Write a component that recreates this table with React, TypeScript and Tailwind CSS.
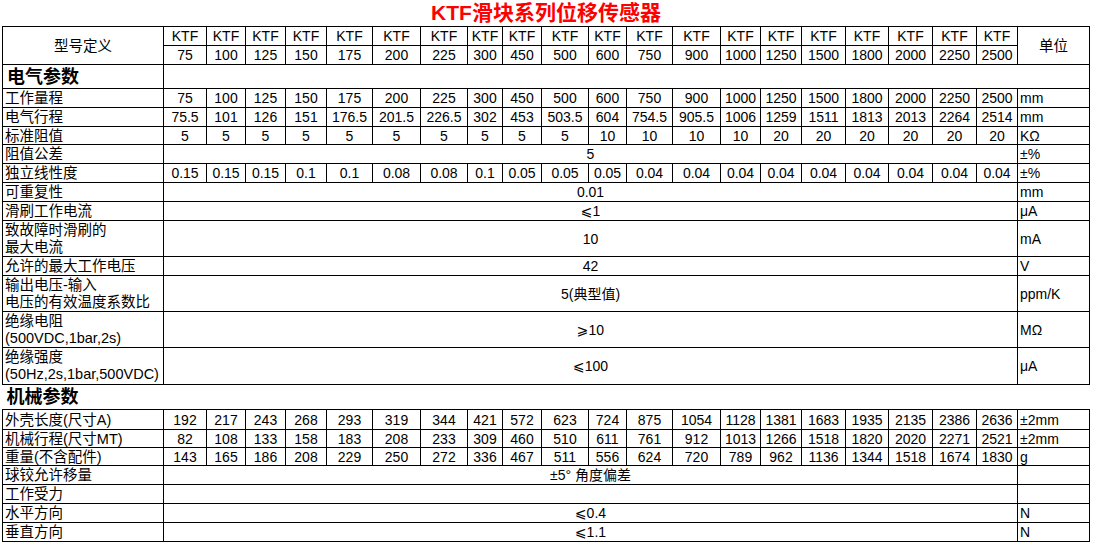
import React from "react";

const models = [75, 100, 125, 150, 175, 200, 225, 300, 450, 500, 600, 750, 900, 1000, 1250, 1500, 1800, 2000, 2250, 2500];
const colWidths = [161, 43, 39, 40, 41, 46, 48, 47, 35, 39, 47, 38, 46, 48, 40, 41, 44, 43, 44, 44, 41, 72];

type Row =
  | { kind: "values"; label: string; values: (string | number)[]; unit: string; h: string }
  | { kind: "span"; label: React.ReactNode; value: string; unit: string; h: string; two?: boolean }
  | { kind: "section"; label: string; h: string; open?: boolean };

const rows: Row[] = [
  { kind: "section", label: "电气参数", h: "h-[24px]" },
  { kind: "values", label: "工作量程", values: models, unit: "mm", h: "h-[19px]" },
  {
    kind: "values",
    label: "电气行程",
    values: ["75.5", 101, 126, 151, "176.5", "201.5", "226.5", 302, 453, "503.5", 604, "754.5", "905.5", 1006, 1259, 1511, 1813, 2013, 2264, 2514],
    unit: "mm",
    h: "h-[19px]",
  },
  {
    kind: "values",
    label: "标准阻值",
    values: [5, 5, 5, 5, 5, 5, 5, 5, 5, 5, 10, 10, 10, 10, 20, 20, 20, 20, 20, 20],
    unit: "KΩ",
    h: "h-[18px]",
  },
  { kind: "span", label: "阻值公差", value: "5", unit: "±%", h: "h-[19px]" },
  {
    kind: "values",
    label: "独立线性度",
    values: ["0.15", "0.15", "0.15", "0.1", "0.1", "0.08", "0.08", "0.1", "0.05", "0.05", "0.05", "0.04", "0.04", "0.04", "0.04", "0.04", "0.04", "0.04", "0.04", "0.04"],
    unit: "±%",
    h: "h-[19px]",
  },
  { kind: "span", label: "可重复性", value: "0.01", unit: "mm", h: "h-[19px]" },
  { kind: "span", label: "滑刷工作电流", value: "⩽1", unit: "μA", h: "h-[19px]" },
  {
    kind: "span",
    label: (
      <>
        致故障时滑刷的
        <br />
        最大电流
      </>
    ),
    value: "10",
    unit: "mA",
    h: "h-[36px]",
    two: true,
  },
  { kind: "span", label: "允许的最大工作电压", value: "42", unit: "V", h: "h-[19px]" },
  {
    kind: "span",
    label: (
      <>
        输出电压-输入
        <br />
        电压的有效温度系数比
      </>
    ),
    value: "5(典型值)",
    unit: "ppm/K",
    h: "h-[36px]",
    two: true,
  },
  {
    kind: "span",
    label: (
      <>
        绝缘电阻
        <br />
        (500VDC,1bar,2s)
      </>
    ),
    value: "⩾10",
    unit: "MΩ",
    h: "h-[36px]",
    two: true,
  },
  {
    kind: "span",
    label: (
      <>
        绝缘强度
        <br />
        (50Hz,2s,1bar,500VDC)
      </>
    ),
    value: "⩽100",
    unit: "μA",
    h: "h-[37px]",
    two: true,
  },
  { kind: "section", label: "机械参数", h: "h-[25px]", open: true },
  {
    kind: "values",
    label: "外壳长度(尺寸A)",
    values: [192, 217, 243, 268, 293, 319, 344, 421, 572, 623, 724, 875, 1054, 1128, 1381, 1683, 1935, 2135, 2386, 2636],
    unit: "±2mm",
    h: "h-[20px]",
  },
  {
    kind: "values",
    label: "机械行程(尺寸MT)",
    values: [82, 108, 133, 158, 183, 208, 233, 309, 460, 510, 611, 761, 912, 1013, 1266, 1518, 1820, 2020, 2271, 2521],
    unit: "±2mm",
    h: "h-[18px]",
  },
  {
    kind: "values",
    label: "重量(不含配件)",
    values: [143, 165, 186, 208, 229, 250, 272, 336, 467, 511, 556, 624, 720, 789, 962, 1136, 1344, 1518, 1674, 1830],
    unit: "g",
    h: "h-[18px]",
  },
  { kind: "span", label: "球铰允许移量", value: "±5° 角度偏差", unit: "", h: "h-[19px]" },
  { kind: "span", label: "工作受力", value: "", unit: "", h: "h-[19px]" },
  { kind: "span", label: "水平方向", value: "⩽0.4", unit: "N", h: "h-[19px]" },
  { kind: "span", label: "垂直方向", value: "⩽1.1", unit: "N", h: "h-[19px]" },
];

const cell = "border border-black p-0 leading-[16px] whitespace-nowrap overflow-hidden";

const App = () => {
  return (
    <div className="w-[1100px] h-[551px] bg-white text-black font-['Liberation_Sans','Noto_Sans_CJK_SC','DejaVu_Sans',sans-serif] text-[14px]">
      <div className="ml-[2px] w-[1088px] h-[26px] pt-[1px] text-center text-[21px] leading-[24px] font-bold text-[#ff0000]">
        KTF滑块系列位移传感器
      </div>

      <table className="ml-[2px] table-fixed border-collapse w-[1088px]">
        <colgroup>
          {colWidths.map((w, i) => (
            <col key={i} style={{ width: w }} />
          ))}
        </colgroup>
        <tbody>
          <tr className="h-[19px]">
            <td rowSpan={2} className={`${cell} text-center align-middle text-[14.5px]`}>
              型号定义
            </td>
            {models.map((m) => (
              <td key={m} className={`${cell} text-center`}>
                KTF
              </td>
            ))}
            <td rowSpan={2} className={`${cell} text-center align-middle text-[14.5px]`}>
              单位
            </td>
          </tr>
          <tr className="h-[19px]">
            {models.map((m) => (
              <td key={m} className={`${cell} text-center`}>
                {m}
              </td>
            ))}
          </tr>

          {rows.map((r, i) => {
            if (r.kind === "section") {
              return (
                <tr key={i} className={r.h}>
                  <td
                    className={`${cell} pl-[4px] text-[18px] leading-[20px] ${r.open ? "border-x-0 font-semibold" : "font-bold"}`}
                  >
                    {r.label}
                  </td>
                  <td colSpan={21} className={`${cell} ${r.open ? "border-x-0" : ""}`}></td>
                </tr>
              );
            }
            if (r.kind === "values") {
              return (
                <tr key={i} className={r.h}>
                  <td className={`${cell} pl-[2px] text-[14.5px]`}>{r.label}</td>
                  {r.values.map((v, j) => (
                    <td key={j} className={`${cell} text-center`}>
                      {v}
                    </td>
                  ))}
                  <td className={`${cell} pl-[2px]`}>{r.unit}</td>
                </tr>
              );
            }
            return (
              <tr key={i} className={r.h}>
                <td className={`${cell} pl-[2px] text-[14.5px] ${r.two ? "leading-[17px]" : ""}`}>{r.label}</td>
                <td colSpan={20} className={`${cell} text-center`}>
                  {r.value}
                </td>
                <td className={`${cell} pl-[2px]`}>{r.unit}</td>
              </tr>
            );
          })}
        </tbody>
      </table>
    </div>
  );
};

export default App;
